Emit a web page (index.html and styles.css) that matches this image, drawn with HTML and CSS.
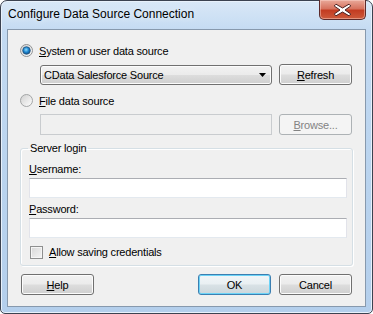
FILE: index.html
```html
<!DOCTYPE html>
<html lang="en">
<head>
    <meta charset="UTF-8">
    <title>Configure Data Source Connection</title>
    <link rel="stylesheet" href="styles.css">
</head>
<body>
    <div class="window">
        <div class="titlebar">
            <span class="title">Configure Data Source Connection</span>
            <button class="close-btn" aria-label="Close">
                <svg width="19" height="14" viewBox="0 0 19 14">
                    <path d="M3 1.2 L9.5 5 L16 1.2 L17.8 3 L12 7 L17.8 11 L16 12.8 L9.5 9 L3 12.8 L1.2 11 L7 7 L1.2 3 Z" fill="#fff" stroke="#4a2222" stroke-width="1" stroke-linejoin="round"/>
                </svg>
            </button>
        </div>

        <div class="client">
            <label class="radio-row">
                <svg class="radio" width="13" height="13" viewBox="0 0 13 13">
                    <defs>
                        <linearGradient id="rg" x1="0" y1="0" x2="1" y2="1">
                            <stop offset="0" stop-color="#cfcfcf"/>
                            <stop offset="1" stop-color="#ffffff"/>
                        </linearGradient>
                        <radialGradient id="dot" cx="0.45" cy="0.4" r="0.6">
                            <stop offset="0" stop-color="#8fdcff"/>
                            <stop offset="0.55" stop-color="#1c86d0"/>
                            <stop offset="1" stop-color="#174f86"/>
                        </radialGradient>
                    </defs>
                    <circle cx="6.5" cy="6.5" r="6" fill="url(#rg)" stroke="#8f9192"/>
                    <circle cx="6.5" cy="6.5" r="3.8" fill="url(#dot)" stroke="#25557f" stroke-width="0.8"/>
                </svg>
                <span><u>S</u>ystem or user data source</span>
            </label>

            <div class="field-row">
                <div class="combo">
                    <span>CData Salesforce Source</span>
                    <svg width="7" height="4" viewBox="0 0 7 4"><path d="M0 0 H7 L3.5 4 Z" fill="#000"/></svg>
                </div>
                <button class="btn"><u>R</u>efresh</button>
            </div>

            <label class="radio-row second">
                <svg class="radio" width="13" height="13" viewBox="0 0 13 13">
                    <circle cx="6.5" cy="6.5" r="6" fill="url(#rg)" stroke="#a3a5a6"/>
                </svg>
                <span><u>F</u>ile data source</span>
            </label>

            <div class="field-row">
                <div class="textbox disabled"></div>
                <button class="btn" disabled><u>B</u>rowse...</button>
            </div>

            <fieldset class="login">
                <legend>Server login</legend>
                <div class="label"><u>U</u>sername:</div>
                <div class="textbox"></div>
                <div class="label"><u>P</u>assword:</div>
                <div class="textbox"></div>
                <label class="check-row">
                    <span class="checkbox"></span>
                    <span><u>A</u>llow saving credentials</span>
                </label>
            </fieldset>

            <div class="actions">
                <button class="btn"><u>H</u>elp</button>
                <div class="spacer"></div>
                <button class="btn default">OK</button>
                <button class="btn">Cancel</button>
            </div>
        </div>
    </div>
</body>
</html>
```

FILE: styles.css
```css
body {
    margin: 0;
    font-family: 'Liberation Sans', Arial, sans-serif;
    font-size: 11px;
    letter-spacing: -0.2px;
    line-height: 14px;
    background: #fff;
}

.window {
    width: 373px;
    height: 314px;
    box-sizing: border-box;
    border: 1px solid #3b4250;
    border-radius: 7px 7px 5px 5px;
    background: linear-gradient(180deg, #d9e8f7 0%, #c3daf2 10%, #b9d3ee 60%, #b4cfec 100%);
    box-shadow: inset 0 0 0 1px #e8f1fb;
    display: flex;
    flex-direction: column;
}

.titlebar {
    height: 28px;
    display: flex;
    align-items: flex-start;
    position: relative;
}

.title {
    margin: 6px 0 0 7px;
    font-size: 12px;
    letter-spacing: 0;
    color: #000;
    text-shadow: 0 0 6px #eef5fc;
}

.close-btn {
    position: absolute;
    right: 6px;
    top: -1px;
    width: 47px;
    height: 20px;
    padding: 0;
    border: 1px solid #5c2a2a;
    border-top: none;
    border-radius: 0 0 5px 5px;
    background: linear-gradient(180deg, #e9a99a 0%, #d7735f 45%, #c33c22 55%, #cd5a3c 100%);
    box-shadow: inset 0 0 0 1px rgba(255, 220, 210, 0.45);
    display: flex;
    align-items: center;
    justify-content: center;
}

.client {
    margin: 0 6px 6px;
    flex: 1;
    border: 1px solid #8799ad;
    background: #f0f0f0;
    padding: 14px 13px 0 12px;
    box-sizing: border-box;
}

.radio-row {
    display: flex;
    align-items: center;
    gap: 6px;
    height: 13px;
}

.radio-row.second {
    margin-top: 9px;
}

.field-row {
    display: flex;
    gap: 7px;
    margin: 7px 0 0 20px;
    height: 21px;
}

.combo {
    width: 232px;
    height: 20px;
    margin-top: 1px;
    box-sizing: border-box;
    border: 1px solid #707070;
    border-radius: 3px;
    background: linear-gradient(180deg, #f2f2f2 0%, #ebebeb 49%, #dddddd 51%, #cfcfcf 100%);
    box-shadow: inset 0 0 0 1px #fcfcfc;
    display: flex;
    align-items: center;
    justify-content: space-between;
    padding: 0 4px 0 3px;
}

.combo svg {
    margin-right: 1px;
}

.btn {
    width: 73px;
    height: 21px;
    padding: 0;
    font-family: inherit;
    font-size: 11px;
    letter-spacing: -0.2px;
    color: #000;
    border: 1px solid #707070;
    border-radius: 3px;
    background: linear-gradient(180deg, #f2f2f2 0%, #ebebeb 49%, #dddddd 51%, #cfcfcf 100%);
    box-shadow: inset 0 0 0 1px #fcfcfc;
}

.btn:disabled {
    color: #838383;
    border-color: #adb2b5;
    background: #f4f4f4;
    box-shadow: none;
}

.btn.default {
    border-color: #3c7fb1;
    box-shadow: inset 0 0 0 1px #6cd3f7;
    background: linear-gradient(180deg, #f1f6f8 0%, #e9eff2 49%, #d9e2e6 51%, #ccd6db 100%);
}

.textbox {
    height: 20px;
    box-sizing: border-box;
    background: #fff;
    border: 1px solid #e2e3ea;
    border-top-color: #abadb3;
    border-bottom-color: #e3e9ef;
}

.field-row .textbox {
    width: 232px;
    height: 21px;
}

.textbox.disabled {
    background: #f0f0f0;
    border-color: #c9cccf;
    border-top-color: #c9cccf;
}

.login {
    margin: 6px 0 0 0;
    width: 333px;
    box-sizing: border-box;
    border: 1px solid #d5dfe5;
    border-radius: 3px;
    box-shadow: inset 1px 1px 0 #fff, 1px 1px 0 #fff;
    padding: 2px 5px 7px 8px;
    height: 125px;
}

.login legend {
    padding: 0 2px;
    margin-left: -1px;
    line-height: 14px;
}

.label {
    margin-top: 5px;
}

.login .textbox {
    margin-top: 2px;
    width: 318px;
}

.login .textbox + .label {
    margin-top: 4px;
}

.check-row {
    display: flex;
    align-items: center;
    gap: 6px;
    margin: 7px 0 0 1px;
}

.checkbox {
    width: 13px;
    height: 13px;
    box-sizing: border-box;
    border: 1px solid #8e8f8f;
    background: linear-gradient(135deg, #d7d7d7 0%, #f4f4f4 100%);
    box-shadow: inset 0 0 0 1px #f5f5f5;
}

.actions {
    display: flex;
    gap: 8px;
    margin: 8px 0 0 1px;
}

.spacer {
    flex: 1;
}
```
